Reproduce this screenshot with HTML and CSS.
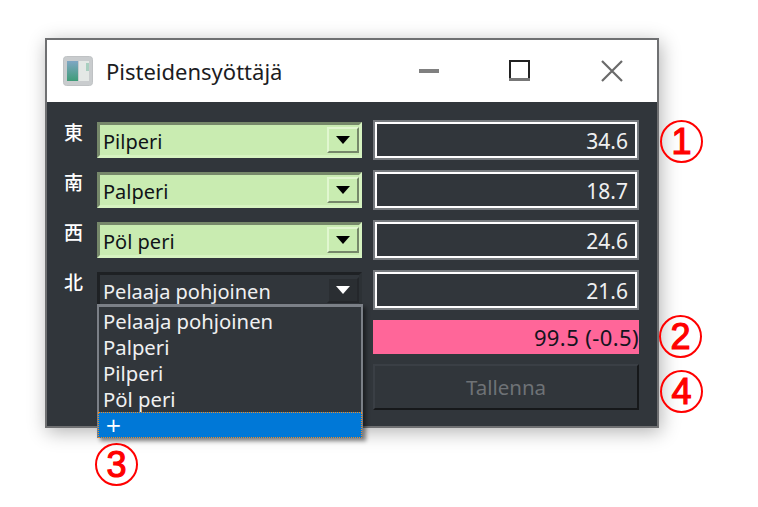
FILE: index.html
```html
<!DOCTYPE html>
<html>
<head>
    <title>Pisteidensyöttäjä</title>
    <link rel="stylesheet" href="styles.css">
</head>
<body>
    <div class="window">
        <div class="titlebar">
            <svg class="appicon" width="30" height="30" viewBox="0 0 30 30">
                <defs>
                    <linearGradient id="pane" x1="0" y1="0" x2="0" y2="1">
                        <stop offset="0" stop-color="#7fa6c4"/>
                        <stop offset="1" stop-color="#3f9c78"/>
                    </linearGradient>
                </defs>
                <rect x="0.5" y="0.5" width="29" height="29" rx="3" fill="#c9ccce" stroke="#bfc2c4"/>
                <rect x="4" y="5" width="11" height="20" fill="url(#pane)"/>
                <rect x="16" y="5" width="10" height="20" fill="#e4e8e6"/>
                <rect x="23" y="7" width="3" height="8" fill="#a9cfc0"/>
            </svg>
            <span class="title">Pisteidensyöttäjä</span>
            <svg class="winbtn btn-min" width="20" height="20" viewBox="0 0 20 20"><rect x="0" y="8" width="20" height="4" fill="#808080"/></svg>
            <svg class="winbtn btn-max" width="22" height="22" viewBox="0 0 22 22"><rect x="1" y="1" width="19" height="19" fill="none" stroke="#222" stroke-width="2"/><rect x="0" y="18" width="21" height="3" fill="#777"/></svg>
            <svg class="winbtn btn-close" width="22" height="22" viewBox="0 0 22 22"><path d="M1 1L21 21M21 1L1 21" stroke="#6a6a6a" stroke-width="2.2" fill="none"/></svg>
        </div>
        <div class="content">
            <div class="wind">東</div>
            <div class="combo green"><span class="combo-text">Pilperi</span><span class="arrow"></span></div>
            <div class="value">34.6</div>

            <div class="wind">南</div>
            <div class="combo green"><span class="combo-text">Palperi</span><span class="arrow"></span></div>
            <div class="value">18.7</div>

            <div class="wind">西</div>
            <div class="combo green"><span class="combo-text">Pöl peri</span><span class="arrow"></span></div>
            <div class="value">24.6</div>

            <div class="wind">北</div>
            <div class="combo dark">
                <span class="combo-text">Pelaaja pohjoinen</span><span class="arrow"></span>
                <ul class="popup">
                    <li>Pelaaja pohjoinen</li>
                    <li>Palperi</li>
                    <li>Pilperi</li>
                    <li>Pöl peri</li>
                    <li class="current">+</li>
                </ul>
            </div>
            <div class="value">21.6</div>

            <div class="total">99.5 (-0.5)</div>
            <button class="save" disabled>Tallenna</button>
        </div>
    </div>

    <span class="mark mark1">1</span>
    <span class="mark mark2">2</span>
    <span class="mark mark3">3</span>
    <span class="mark mark4">4</span>
</body>
</html>
```

FILE: styles.css
```css
body {
    margin: 0;
    background: #fff;
    font-family: "Noto Sans", "Noto Sans CJK JP", sans-serif;
}

.window {
    position: absolute;
    left: 45px;
    top: 38px;
    width: 610px;
    height: 386px;
    border: 2px solid #6f7072;
    background: #31363b;
    box-shadow: 2px 4px 18px rgba(0, 0, 0, 0.3);
}

.titlebar {
    display: flex;
    align-items: center;
    height: 62px;
    padding-left: 16px;
    background: #fff;
}

.title {
    margin-left: 13px;
    width: 307px;
    font-size: 22px;
    color: #1c1c22;
}

.winbtn { flex: none; }
.btn-min { margin-left: 6px; }
.btn-max { margin-left: 70px; }
.btn-close { margin-left: 70px; }

.content {
    display: grid;
    grid-template-columns: 21px 265px 266px;
    grid-template-rows: 40px 40px 40px 40px 34px 46px;
    column-gap: 11px;
    row-gap: 10px;
    padding: 18px 0 0 18px;
}

.wind {
    color: #fff;
    font-family: "Noto Sans CJK JP", sans-serif;
    font-size: 19px;
    font-weight: 500;
    line-height: 24px;
    margin-left: -1px;
}

.combo {
    position: relative;
    align-self: center;
    display: flex;
    align-items: center;
    justify-content: space-between;
    box-sizing: border-box;
    height: 36px;
    border-style: solid;
    border-width: 3px;
    font-size: 20px;
}

.combo-text {
    display: block;
    height: 30px;
    line-height: 33px;
    padding-left: 3px;
    overflow: hidden;
    white-space: nowrap;
}

.arrow {
    display: flex;
    align-items: center;
    justify-content: center;
    box-sizing: border-box;
    width: 32px;
    height: 26px;
    border-style: solid;
    border-width: 2px;
}

.arrow::after {
    content: "";
    border-left: 7px solid transparent;
    border-right: 7px solid transparent;
    border-top: 8px solid #000;
}

.green {
    background: #c9ecb1;
    color: #101418;
    border-color: #76886a #d6f3c0 #d6f3c0 #76886a;
}

.green .arrow {
    background: #c9ecb1;
    border-color: #e1f7d0 #76886a #76886a #e1f7d0;
}

.dark {
    background: #31363b;
    color: #eff0f1;
    border-color: #1e2124 #2c3135 #2c3135 #1e2124;
}

.dark .arrow {
    background: #2a2e32;
    border-color: #31363b #24272b #24272b #31363b;
}

.dark .arrow::after {
    border-top-color: #fff;
}

.popup {
    position: absolute;
    left: -3px;
    top: 29px;
    z-index: 2;
    box-sizing: border-box;
    width: 266px;
    height: 134px;
    margin: 0;
    padding: 1px 0 0;
    list-style: none;
    background: #31363b;
    border: 2px solid #7b8087;
    border-top-width: 3px;
    border-bottom: 0;
    box-shadow: 3px 3px 4px rgba(0, 0, 0, 0.45);
    font-size: 20.3px;
}

.popup li {
    box-sizing: border-box;
    height: 26px;
    padding-left: 4px;
    line-height: 26px;
    color: #eff0f1;
    white-space: nowrap;
}

.popup .current {
    margin: 0 -1px;
    padding-left: 6px;
    line-height: 24px;
    background: #0078d7;
    color: #fff;
    font-family: "DejaVu Sans", sans-serif;
    font-size: 20px;
    border: 1px dotted #f58a1f;
}

.value {
    box-sizing: border-box;
    height: 40px;
    border: 4px solid #fff;
    outline: 2px solid #767a7e;
    outline-offset: -2px;
    padding: 2px 7px 0 0;
    line-height: 30px;
    text-align: right;
    font-size: 21px;
    color: #eff0f1;
}

.total {
    grid-column: 3;
    background: #ff6699;
    color: #14141e;
    font-size: 22px;
    letter-spacing: 0.4px;
    line-height: 34px;
    text-align: right;
}

.save {
    grid-column: 3;
    background: #31363b;
    border-style: solid;
    border-width: 2px;
    border-color: #3a3f45 #16181a #16181a #3a3f45;
    color: #6e7276;
    font-family: inherit;
    font-size: 20.5px;
    padding: 0;
}

/* red numbered circles over the screenshot */
.mark {
    position: absolute;
    display: flex;
    align-items: center;
    justify-content: center;
    box-sizing: border-box;
    width: 43px;
    height: 43px;
    border: 2.5px solid #f00;
    border-radius: 50%;
    color: #f00;
    font-family: "Liberation Sans", sans-serif;
    font-size: 36px;
    font-weight: 400;
    -webkit-text-stroke: 1.2px #f00;
    line-height: 37px;
}

.mark1 { left: 660px; top: 120px; }
.mark2 { left: 659px; top: 315px; }
.mark3 { left: 95px; top: 443px; }
.mark4 { left: 660px; top: 370px; }
```
